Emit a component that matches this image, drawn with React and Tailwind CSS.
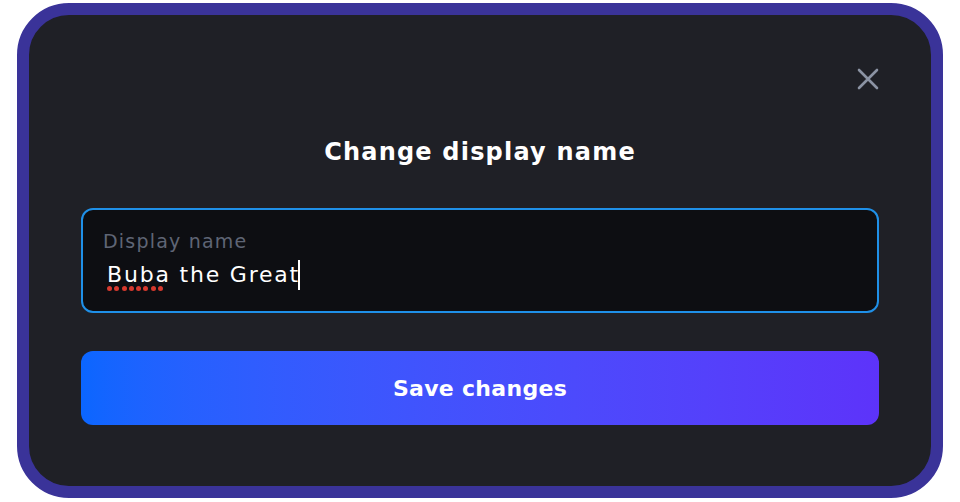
import React from 'react'

export default function App() {
  return (
    <div className="min-h-screen bg-white px-[17px] pt-[3px] pb-[4px] w-[960px] h-[502px]" style={{ fontFamily: '"DejaVu Sans", Inter, sans-serif' }}>
      <div className="h-[495px] rounded-[52px] border-[12px] border-[#3a3399] bg-[#1f2026] px-[52px] pt-[53px]">
        <div className="flex justify-end">
          <button className="w-[22px] h-[22px] text-[#8b93a3]">
            <svg viewBox="0 0 22 22" className="w-[22px] h-[22px]" fill="none" stroke="currentColor" strokeWidth="2.6" strokeLinecap="round">
              <path d="M2 2L20 20M20 2L2 20" />
            </svg>
          </button>
        </div>

        <h2 className="mt-[46px] text-center text-[24px] leading-[32px] font-bold text-white tracking-[1.2px]">
          Change display name
        </h2>

        <div className="mt-[40px] h-[105px] rounded-[12px] border-2 border-[#1f90e8] bg-[#0d0e12] px-[20px] pt-[18px]">
          <div className="text-[19px] leading-[26px] text-[#5f6575] tracking-[1.2px]">Display name</div>
          <div className="mt-[6px] flex items-center text-[22px] leading-[30px] text-white pl-[4px] tracking-[1.8px]">
            <span className="relative">
              Buba
              <span className="absolute left-0 top-[26px] flex gap-[2.3px]">
                {[0, 1, 2, 3, 4, 5, 6, 7].map((i) => (
                  <span key={i} className="w-[5px] h-[5px] rounded-full bg-[#d6392e]"></span>
                ))}
              </span>
            </span>
            <span>&nbsp;the Grea</span>
            <span className="tracking-normal">t</span>
            <span className="w-[1.5px] h-[30px] bg-white"></span>
          </div>
        </div>

        <button className="mt-[38px] w-full h-[74px] rounded-[12px] bg-gradient-to-r from-[#0a66ff] to-[#5d33fa] text-white text-[22px] font-bold tracking-[0.3px]">
          Save changes
        </button>
      </div>
    </div>
  )
}
